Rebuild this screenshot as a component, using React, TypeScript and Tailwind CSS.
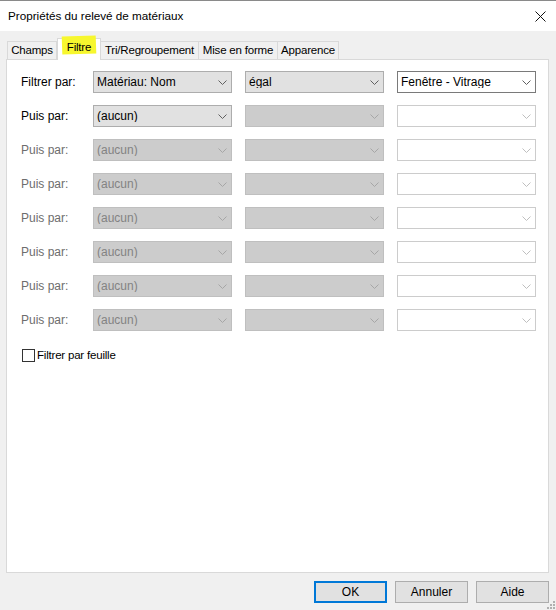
import React from 'react';

const font = "font-['Segoe_UI','Liberation_Sans',Arial,sans-serif]";

type ComboKind = 'enabled' | 'disabled' | 'edit' | 'editDisabled';

const Chevron: React.FC<{ color: string }> = ({ color }) => (
    <svg width="9" height="5" viewBox="0 0 9 5" className="shrink-0">
        <path d="M0.5 0.5 L4.5 4.5 L8.5 0.5" fill="none" stroke={color} strokeWidth="1" />
    </svg>
);

const Combo: React.FC<{ kind: ComboKind; text?: string }> = ({ kind, text }) => {
    const styles: Record<ComboKind, string> = {
        enabled: 'bg-[#e1e1e1] border-[#adadad] text-black',
        disabled: 'bg-[#cccccc] border-[#bfbfbf] text-[#838383]',
        edit: 'bg-white border-[#7a7a7a] text-black',
        editDisabled: 'bg-white border-[#cccccc] text-[#838383]',
    };
    const chevron: Record<ComboKind, string> = {
        enabled: '#606060',
        disabled: '#a6a6a6',
        edit: '#606060',
        editDisabled: '#bfbfbf',
    };
    return (
        <div className={`flex h-[22px] w-[139px] items-center justify-between border pl-[3px] pr-[4px] text-[12px] ${styles[kind]}`}>
            <span className="truncate leading-none">{text}</span>
            <Chevron color={chevron[kind]} />
        </div>
    );
};

const rows = Array.from({ length: 6 });

export default function App() {
    return (
        <div className={`flex h-[610px] w-[556px] flex-col overflow-hidden border-t border-[#8a8a8a] bg-[#f0f0f0] ${font}`}>
            {/* title bar */}
            <div className="flex h-[30px] shrink-0 items-center justify-between bg-white pl-[8px] pr-[10px]">
                <span className="text-[11.7px] text-black">Propriétés du relevé de matériaux</span>
                <svg width="11" height="11" viewBox="0 0 11 11">
                    <path d="M0.5 0.5 L10.5 10.5 M10.5 0.5 L0.5 10.5" stroke="#111" strokeWidth="1" />
                </svg>
            </div>

            <div className="relative flex flex-1 flex-col px-[6px] pt-[7px]">
                {/* tabs */}
                <div className="flex h-[21px] items-end pl-[1px] text-[11.5px] tracking-[-0.2px] text-black">
                    <div className="flex h-[18px] w-[50px] items-center justify-center border border-b-0 border-[#d9d9d9]">Champs</div>
                    <div className="relative z-10 -mb-px flex h-[22px] w-[44px] items-center justify-center border border-b-0 border-[#d9d9d9] bg-white">
                        <span className="absolute left-[4px] top-[-3px] h-[18px] w-[34px] -rotate-2 bg-[#f7f72e]" />
                        <span className="relative -mt-[3px]">Filtre</span>
                    </div>
                    <div className="flex h-[18px] w-[98px] items-center justify-center border border-b-0 border-l-0 border-[#d9d9d9]">Tri/Regroupement</div>
                    <div className="flex h-[18px] w-[79px] items-center justify-center border border-b-0 border-l-0 border-[#d9d9d9]">Mise en forme</div>
                    <div className="flex h-[18px] w-[61px] items-center justify-center border border-b-0 border-l-0 border-[#d9d9d9]">Apparence</div>
                </div>

                {/* panel */}
                <div className="flex h-[514px] w-[543px] flex-col gap-[12px] border border-[#d9d9d9] bg-white pl-[14px] pt-[11px] text-[12px]">
                    <div className="flex items-center">
                        <span className="w-[72px] text-black">Filtrer par:</span>
                        <div className="flex gap-[13px]">
                            <Combo kind="enabled" text="Matériau: Nom" />
                            <Combo kind="enabled" text="égal" />
                            <Combo kind="edit" text="Fenêtre - Vitrage" />
                        </div>
                    </div>
                    <div className="flex items-center">
                        <span className="w-[72px] text-black">Puis par:</span>
                        <div className="flex gap-[13px]">
                            <Combo kind="enabled" text="(aucun)" />
                            <Combo kind="disabled" />
                            <Combo kind="editDisabled" />
                        </div>
                    </div>
                    {rows.map((_, i) => (
                        <div key={i} className="flex items-center">
                            <span className="w-[72px] text-[#6d6d6d]">Puis par:</span>
                            <div className="flex gap-[13px]">
                                <Combo kind="disabled" text="(aucun)" />
                                <Combo kind="disabled" />
                                <Combo kind="editDisabled" />
                            </div>
                        </div>
                    ))}
                    <label className="mt-[4px] flex items-center gap-[2px] pl-[1px] text-[11.5px] tracking-[-0.2px] text-black">
                        <span className="h-[13px] w-[13px] border border-[#333333] bg-white" />
                        <span>Filtrer par feuille</span>
                    </label>
                </div>

                {/* footer */}
                <div className="flex justify-end gap-[8px] pr-px pt-[8px]">
                    <button className="h-[22px] w-[73px] border-2 border-[#0078d7] bg-[#e1e1e1] text-[12px] text-black">OK</button>
                    <button className="h-[22px] w-[73px] border border-[#adadad] bg-[#e1e1e1] text-[12px] text-black">Annuler</button>
                    <button className="h-[22px] w-[73px] border border-[#adadad] bg-[#e1e1e1] text-[12px] text-black">Aide</button>
                </div>

                {/* resize grip */}
                <svg width="8" height="8" viewBox="0 0 8 8" className="absolute bottom-[1px] right-[1px]">
                    <rect x="6" y="0" width="2" height="2" fill="#b0b0b0" />
                    <rect x="3" y="3" width="2" height="2" fill="#b0b0b0" />
                    <rect x="6" y="3" width="2" height="2" fill="#b0b0b0" />
                    <rect x="0" y="6" width="2" height="2" fill="#b0b0b0" />
                    <rect x="3" y="6" width="2" height="2" fill="#b0b0b0" />
                    <rect x="6" y="6" width="2" height="2" fill="#b0b0b0" />
                </svg>
            </div>
        </div>
    );
}
